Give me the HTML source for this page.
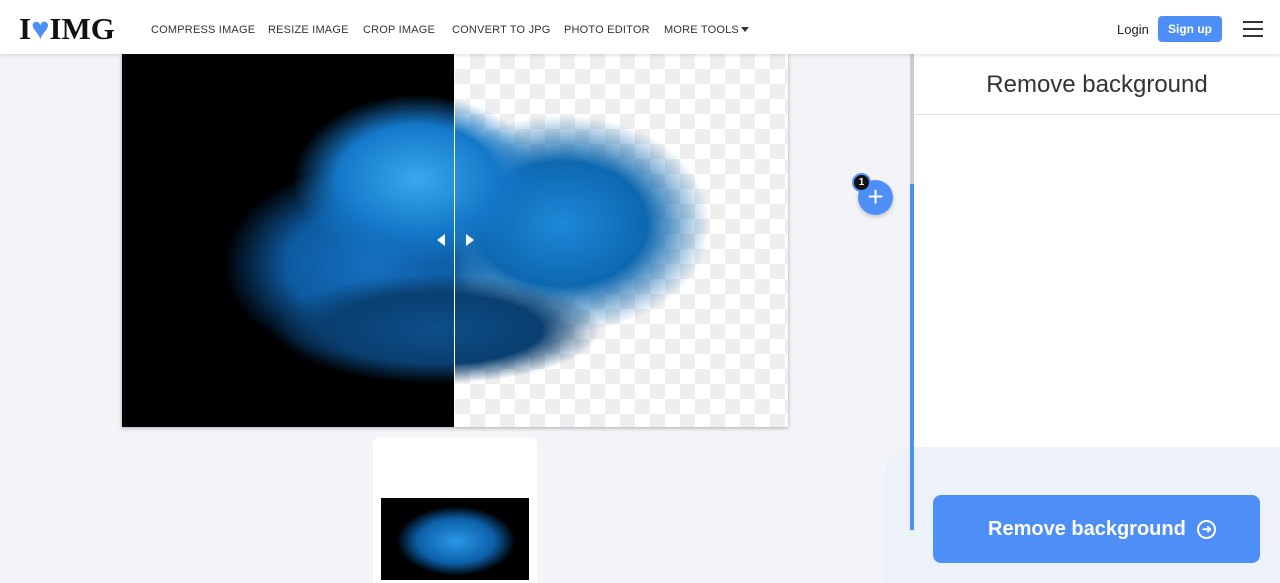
<!DOCTYPE html>
<html><head><style>
*{margin:0;padding:0;box-sizing:border-box}
body{width:1280px;height:583px;overflow:hidden;background:#f4f4f8;font-family:"Liberation Sans",sans-serif;position:relative}
.hdr{position:absolute;left:0;top:0;width:1280px;height:54px;background:#fff;box-shadow:0 1px 4px rgba(0,0,0,.15);z-index:5}
.logo{position:absolute;left:19px;top:12px;font-family:"Liberation Serif",serif;font-weight:bold;font-size:31px;letter-spacing:0px;color:#111;line-height:34px}
.nav{position:absolute;top:24px;font-size:11px;line-height:13px;height:13px;color:#333;letter-spacing:.2px;white-space:nowrap}
.btn{position:absolute;left:1158px;top:16px;width:64px;height:26px;background:#4d8ef7;border-radius:4px;color:#fff;font-size:12px;font-weight:bold;text-align:center;line-height:26px}
.ham{position:absolute;left:1243px;width:20px;height:2px;background:#333}
.img{position:absolute;left:122px;top:54px;width:666px;height:373px;box-shadow:0 1px 4px rgba(0,0,0,.3);overflow:hidden}
.left{position:absolute;left:0;top:0;width:333px;height:373px;background:#000}
.right{position:absolute;left:333px;top:0;width:333px;height:373px;background-color:#fff;background-image:linear-gradient(45deg,#eee 25%,transparent 25%,transparent 75%,#eee 75%),linear-gradient(45deg,#eee 25%,transparent 25%,transparent 75%,#eee 75%);background-size:30px 30px;background-position:0 0,15px 15px}
.fl{position:absolute;border-radius:50%}
.side{position:absolute;left:914px;top:54px;width:366px;height:529px;background:#fff}
.panel{position:absolute;left:885px;top:447px;width:395px;height:136px;background:#edf1fa;border-top-left-radius:24px}
</style></head><body>
<div class="hdr">
<div class="logo">I<span style="color:#4d8ef7">♥</span>IMG</div>
<div class="nav" style="left:151px">COMPRESS IMAGE</div>
<div class="nav" style="left:268px">RESIZE IMAGE</div>
<div class="nav" style="left:363px">CROP IMAGE</div>
<div class="nav" style="left:452px">CONVERT TO JPG</div>
<div class="nav" style="left:564px">PHOTO EDITOR</div>
<div class="nav" style="left:664px">MORE TOOLS</div>
<div style="position:absolute;left:741px;top:27px;width:0;height:0;border-left:4px solid transparent;border-right:4px solid transparent;border-top:5px solid #333"></div>
<div style="position:absolute;left:1117px;top:22px;font-size:13px;color:#222">Login</div>
<div class="btn">Sign up</div>
<div class="ham" style="top:21px"></div><div class="ham" style="top:28px"></div><div class="ham" style="top:35px"></div>
</div>
<div class="img">
<div class="left"></div><div class="right"></div>
<div class="fl" style="left:100px;top:110px;width:300px;height:200px;background:radial-gradient(ellipse,#1670c0 0%,#0d5aa0 40%,rgba(0,60,120,0) 70%)"></div>
<div class="fl" style="left:290px;top:60px;width:300px;height:220px;background:radial-gradient(ellipse,#1e88d8 0%,#0d68b0 40%,rgba(0,60,120,0) 70%)"></div>
<div class="fl" style="left:170px;top:40px;width:250px;height:170px;background:radial-gradient(ellipse,#37a8f0 0%,#1478c8 45%,rgba(0,60,120,0) 70%)"></div>
<div class="fl" style="left:150px;top:220px;width:330px;height:110px;background:radial-gradient(ellipse,#0d4e8a 0%,#0a3f70 45%,rgba(0,40,80,0) 70%)"></div>
<div style="position:absolute;left:332px;top:0;width:1px;height:373px;background:#fff"></div>
<div style="position:absolute;left:315px;top:180px;width:0;height:0;border:6px solid transparent;border-right:8px solid #fff;border-left:0"></div>
<div style="position:absolute;left:344px;top:180px;width:0;height:0;border:6px solid transparent;border-left:8px solid #fff;border-right:0"></div>
</div>
<div style="position:absolute;left:373px;top:437px;width:164px;height:146px;background:#fff;border-radius:6px 6px 0 0">
<div style="position:absolute;left:8px;top:61px;width:148px;height:82px;background:#000;overflow:hidden"><div class="fl" style="left:15px;top:8px;width:120px;height:70px;background:radial-gradient(ellipse,#2a98e8 0%,#0d60a8 45%,rgba(0,0,0,0) 70%)"></div></div>
</div>
<div class="side">
<div style="position:absolute;left:0;top:17px;width:366px;text-align:center;font-size:24px;color:#333">Remove background</div>
<div style="position:absolute;left:0;top:60px;width:366px;height:1px;background:#ddd"></div>
</div>
<div class="panel"></div>
<div style="position:absolute;left:910px;top:54px;width:4px;height:130px;background:#ccc"></div>
<div style="position:absolute;left:910px;top:184px;width:4px;height:346px;background:#4d8ef7"></div>
<div style="position:absolute;left:858px;top:180px;width:35px;height:35px;border-radius:50%;background:#4d8ef7;box-shadow:0 2px 5px rgba(0,0,0,.2);color:#fff;font-size:28px;line-height:33px;text-align:center">+</div>
<div style="position:absolute;left:852px;top:173px;width:19px;height:19px;border-radius:50%;background:#111;border:2px solid #4d8ef7;color:#fff;font-size:10px;font-weight:bold;text-align:center;line-height:15px">1</div>
<div style="position:absolute;left:933px;top:495px;width:327px;height:68px;background:#4d8ef7;border-radius:8px;color:#fff;font-size:20px;font-weight:bold;line-height:68px;padding-left:55px">Remove background <span style="display:inline-block;width:19px;height:19px;border:2px solid #fff;border-radius:50%;font-size:12px;line-height:15px;text-align:center;vertical-align:2px;margin-left:6px">➜</span></div>
</body></html>
